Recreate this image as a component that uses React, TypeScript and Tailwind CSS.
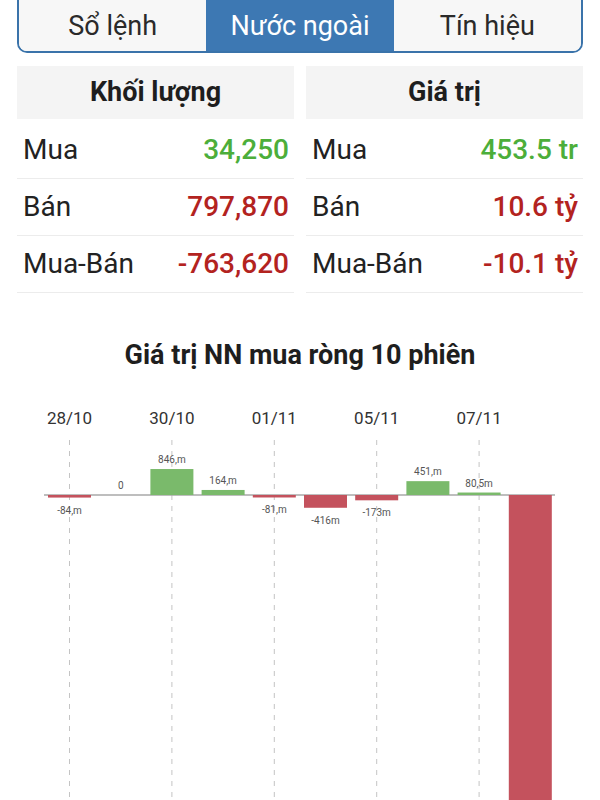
import React from 'react';

const FONT = 'Roboto, "Noto Sans", "Liberation Sans", sans-serif';

const GREEN = '#4cae3a';
const RED = '#b3231f';

const tabs = ['Sổ lệnh', 'Nước ngoài', 'Tín hiệu'];

const volume = [
  { label: 'Mua', value: '34,250', color: GREEN },
  { label: 'Bán', value: '797,870', color: RED },
  { label: 'Mua-Bán', value: '-763,620', color: RED },
];
const amount = [
  { label: 'Mua', value: '453.5 tr', color: GREEN },
  { label: 'Bán', value: '10.6 tỷ', color: RED },
  { label: 'Mua-Bán', value: '-10.1 tỷ', color: RED },
];

// net foreign buy per session, in millions
const sessions = [
  { v: -84, label: '-84,m' },
  { v: 0, label: '0' },
  { v: 846, label: '846,m' },
  { v: 164, label: '164,m' },
  { v: -81, label: '-81,m' },
  { v: -416, label: '-416m' },
  { v: -173, label: '-173m' },
  { v: 451, label: '451,m' },
  { v: 80.5, label: '80,5m' },
  { v: -10100, label: '' },
];
const dates = ['28/10', '30/10', '01/11', '05/11', '07/11'];

const ZERO = 95;
const SCALE = 0.0307;
const BAR_W = 43;
const cx = (i: number) => 69.5 + i * 51.2;

function Panel({ title, rows }: { title: string; rows: typeof volume }) {
  return (
    <div className="flex-1">
      <div className="h-[53px] bg-[#f4f4f4] flex items-center justify-center text-[27px] font-bold text-[#1e1e1e]">
        {title}
      </div>
      <div className="mt-[3px]">
        {rows.map((r) => (
          <div key={r.label} className="h-[57px] flex items-center justify-between pl-[6px] pr-[5px] border-b border-[#ececec]">
            <span className="text-[28px] text-[#222]">{r.label}</span>
            <span className="text-[28px] font-medium" style={{ color: r.color }}>{r.value}</span>
          </div>
        ))}
      </div>
    </div>
  );
}

function Chart() {
  return (
    <svg width={600} height={400} viewBox="0 0 600 400" className="block">
      {dates.map((d, k) => {
        const x = cx(k * 2);
        return (
          <g key={d}>
            <text x={x} y={24} textAnchor="middle" fontSize={17} fill="#333" fontFamily={FONT}>{d}</text>
            <line x1={x} y1={40} x2={x} y2={400} stroke="#c4c4c4" strokeWidth={1} strokeDasharray="5 6" />
          </g>
        );
      })}
      <line x1={44} y1={ZERO} x2={555} y2={ZERO} stroke="#a8a8a8" strokeWidth={1.5} />
      {sessions.map((s, i) => {
        const h = Math.abs(s.v) * SCALE;
        const x = cx(i) - BAR_W / 2;
        const pos = s.v >= 0;
        const y = pos ? ZERO - h : ZERO;
        const ly = pos ? ZERO - h - 6 : ZERO + h + 16;
        return (
          <g key={i}>
            {s.v !== 0 && (
              <rect x={x} y={y} width={BAR_W} height={Math.max(h, 2)} fill={pos ? '#7aba6b' : '#c4525d'} />
            )}
            {s.label && (
              <text x={cx(i)} y={ly} textAnchor="middle" fontSize={10} fill="#555" fontFamily={FONT}>{s.label}</text>
            )}
          </g>
        );
      })}
    </svg>
  );
}

export default function App() {
  return (
    <div className="w-[600px] h-[800px] overflow-hidden bg-white" style={{ fontFamily: FONT }}>
      {/* tab strip, top edge runs off the page */}
      <div className="mx-[17px] h-[53px] flex border-x-2 border-b-2 border-[#3a73aa] rounded-b-[10px] overflow-hidden">
        {tabs.map((t, i) => (
          <div
            key={t}
            className={
              i === 1
                ? 'flex-1 flex items-center justify-center pt-[1px] text-[27px] bg-[#3d78b3] text-white'
                : 'flex-1 flex items-center justify-center pt-[1px] text-[27px] bg-[#f7f7f7] text-[#2a2a2a]'
            }
          >
            {t}
          </div>
        ))}
      </div>

      <div className="mx-[17px] mt-[13px] flex gap-[12px]">
        <Panel title="Khối lượng" rows={volume} />
        <Panel title="Giá trị" rows={amount} />
      </div>

      <h2 className="mt-[47px] h-[30px] flex items-center justify-center text-[27px] font-bold text-[#1e1e1e]">
        Giá trị NN mua ròng 10 phiên
      </h2>

      <div className="mt-[30px]">
        <Chart />
      </div>
    </div>
  );
}
